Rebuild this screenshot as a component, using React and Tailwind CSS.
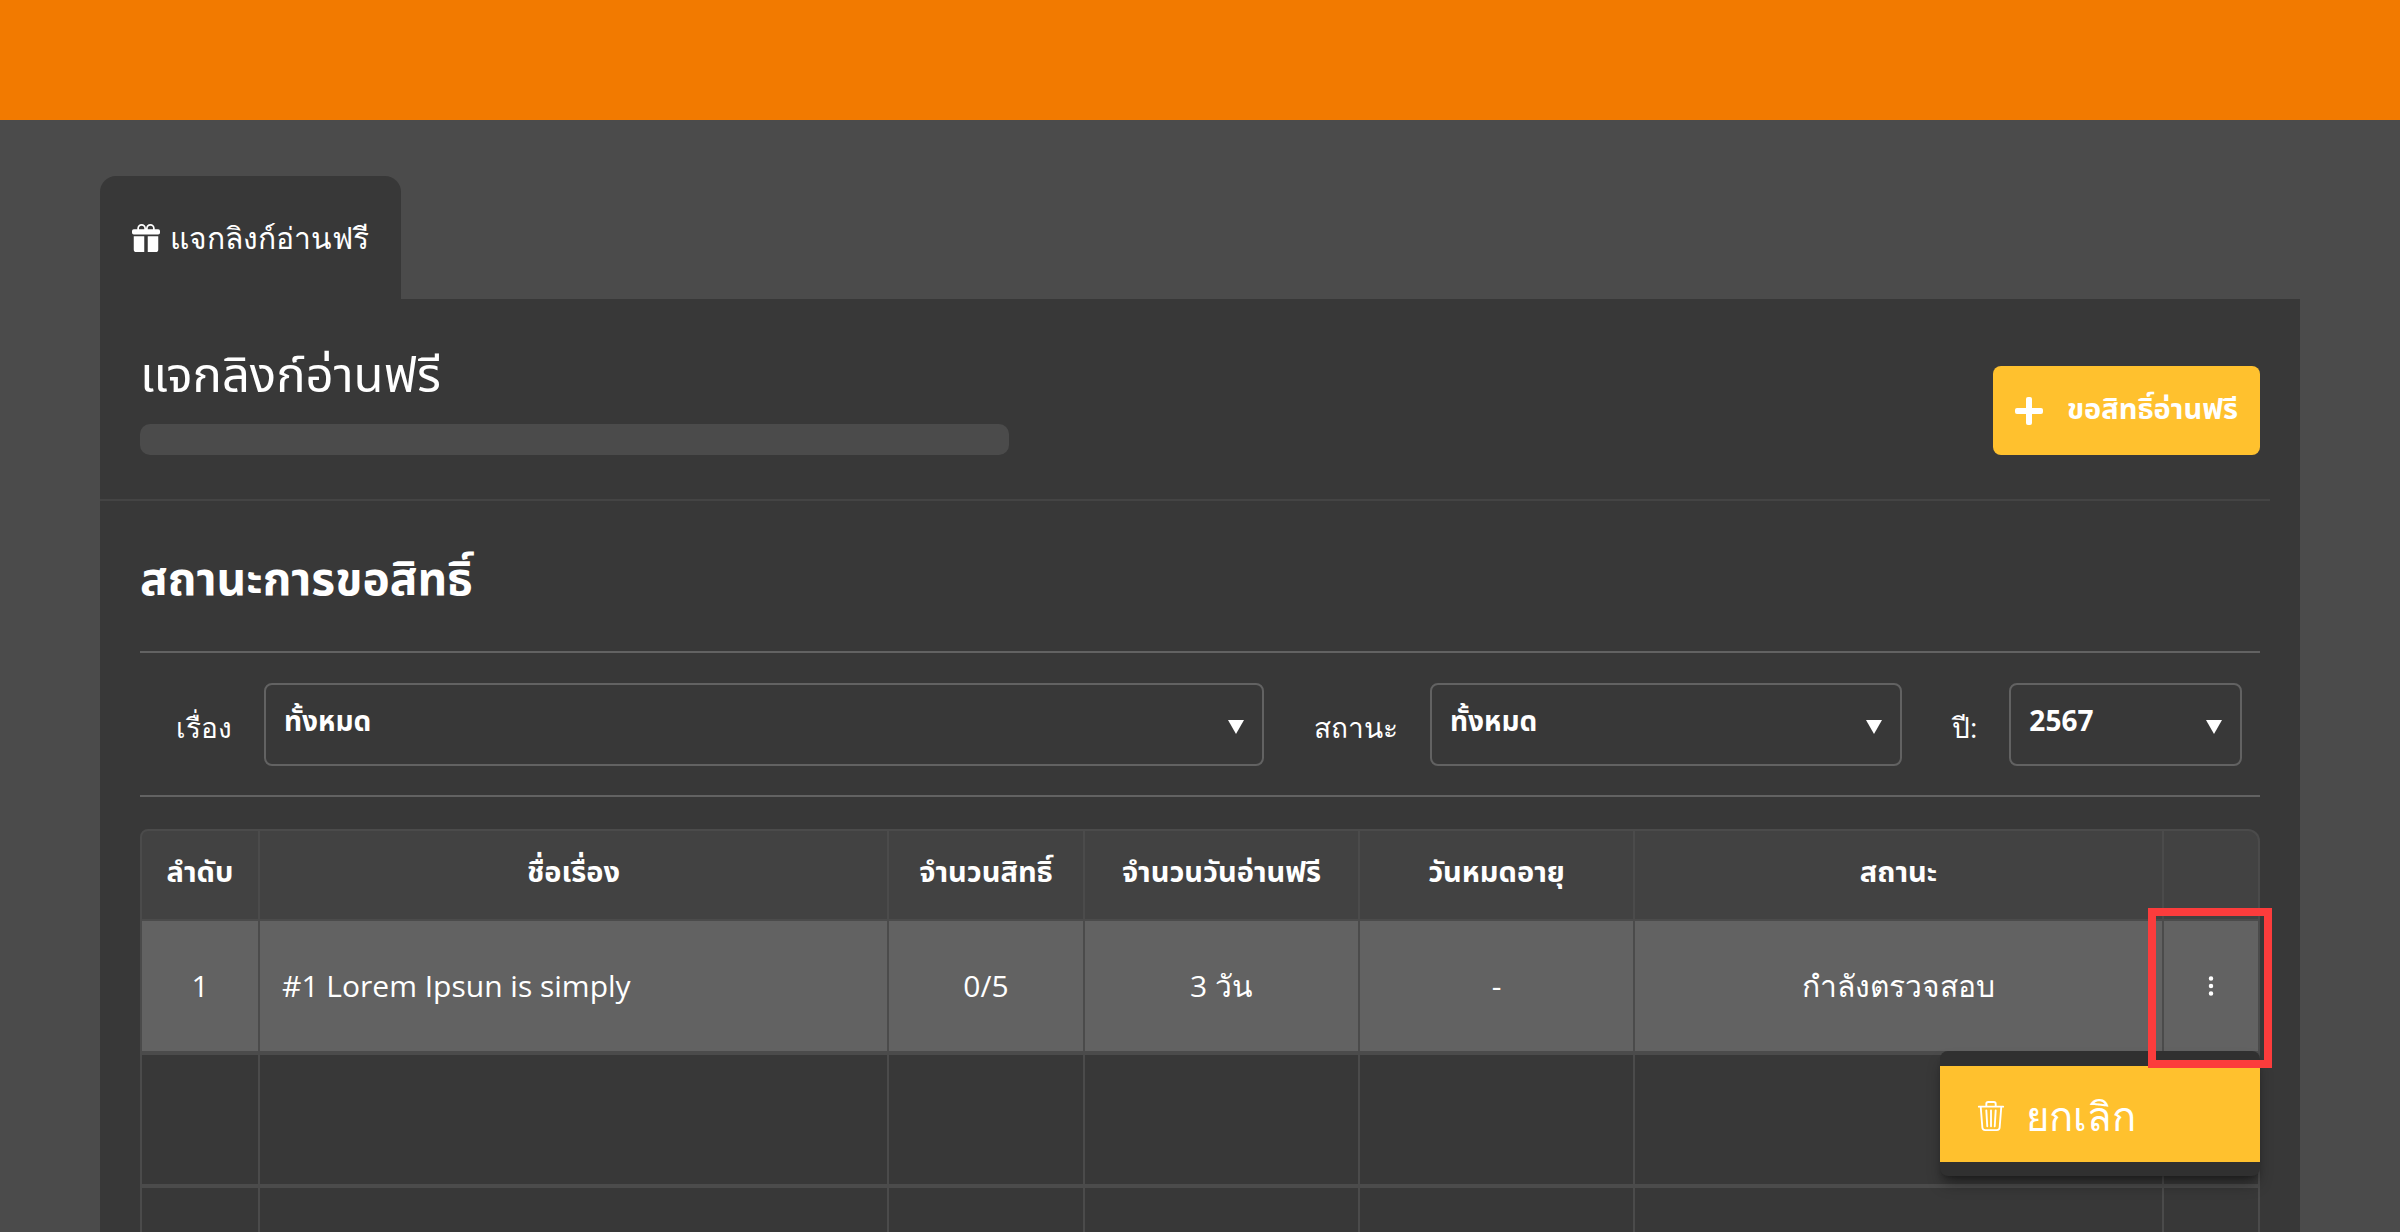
import { BsGiftFill, BsThreeDotsVertical, BsTrash3 } from "react-icons/bs";

const columns = [
  { label: "ลำดับ", width: "w-[120px]" },
  { label: "ชื่อเรื่อง", width: "" },
  { label: "จำนวนสิทธิ์", width: "w-[196px]" },
  { label: "จำนวนวันอ่านฟรี", width: "w-[275px]" },
  { label: "วันหมดอายุ", width: "w-[275px]" },
  { label: "สถานะ", width: "w-[529px]" },
  { label: "", width: "w-24" },
];

const emptyRows = ["second", "third"];

// Headings and bold text use the loopless Thai face; body text uses the looped one.
const headingFont = "font-['Noto_Sans','Noto_Sans_Thai',sans-serif]";
const bodyFont = "font-['Open_Sans',sans-serif]";

function Filter({ id, label, value, className }) {
  return (
    <div className={"flex items-center " + className}>
      <label htmlFor={id} className="mr-8 pt-1 text-[28px] leading-10 whitespace-nowrap">
        {label}
      </label>
      <div className="relative grow">
        <select
          id={id}
          className={
            "block h-[83px] w-full appearance-none rounded-lg border-2 border-[#626262] bg-transparent pr-14 pb-2.5 pl-[18px] text-[28px] font-bold text-white " +
            headingFont
          }
        >
          <option>{value}</option>
        </select>
        <svg
          viewBox="0 0 16 14"
          className="pointer-events-none absolute right-5 bottom-8 h-3.5 w-4"
          aria-hidden="true"
        >
          <path d="M0 0h16L8 14z" fill="white" />
        </svg>
      </div>
    </div>
  );
}

function RequestTable() {
  const cell = "border-r-2 border-b-4 border-[#4b4b4b] first:border-l-2";
  return (
    <table className="mt-8 w-full table-fixed border-separate border-spacing-0 text-center text-[30px] leading-10">
      <thead>
        <tr className={"h-[92px] text-[29px] " + headingFont}>
          {columns.map((column, index) => (
            <th
              key={index}
              className={
                "border-y-2 border-r-2 border-[#4b4b4b] bg-[#424242] pb-2 font-bold whitespace-nowrap first:rounded-tl-lg first:border-l-2 last:rounded-tr-xl " +
                column.width
              }
            >
              {column.label}
            </th>
          ))}
        </tr>
      </thead>
      <tbody>
        <tr className="h-[134px] bg-[#626262]">
          <td className={cell}>1</td>
          <td className={cell + " pl-[22px] text-left"}>#1 Lorem Ipsun is simply</td>
          <td className={cell}>0/5</td>
          <td className={cell}>3 วัน</td>
          <td className={cell}>-</td>
          <td className={cell}>กำลังตรวจสอบ</td>
          <td className={cell + " relative"}>
            <button type="button" aria-label="ตัวเลือก" className="p-4 align-middle">
              <BsThreeDotsVertical className="size-6" />
            </button>
            <div className="absolute top-full -right-0.5 w-80 rounded-lg bg-[#303030] pt-[15px] pb-3.5 shadow-lg shadow-black/40">
              <button
                type="button"
                className="flex h-24 w-full items-center gap-5 bg-[#ffc12e] pt-1 pl-9 text-[40px]"
              >
                <BsTrash3 className="size-[30px]" />
                ยกเลิก
              </button>
            </div>
            <div className="pointer-events-none absolute -top-[13px] -right-3.5 -bottom-[17px] -left-4 border-8 border-[#fc3c3c]" />
          </td>
        </tr>
        {emptyRows.map((row) => (
          <tr key={row} className="h-[133px]">
            {columns.map((_, index) => (
              <td key={index} className={cell} />
            ))}
          </tr>
        ))}
      </tbody>
    </table>
  );
}

export default function App() {
  return (
    <div className={"flex h-screen flex-col overflow-hidden bg-[#4b4b4b] text-white " + bodyFont}>
      <header className="h-[120px] shrink-0 bg-[#f27a00]" />
      <div className="mx-[100px] mt-14 flex grow flex-col">
        <nav className="flex">
          <a
            href="#free-links"
            className="flex h-[123px] items-center gap-2.5 rounded-t-2xl bg-[#383838] px-8 text-[30px] whitespace-nowrap"
          >
            <BsGiftFill className="size-7" />
            แจกลิงก์อ่านฟรี
          </a>
        </nav>
        <main className="grow bg-[#383838]">
          <section className="mr-[30px] flex items-end justify-between border-b-2 border-[#444444] pt-12 pr-2.5 pb-11 pl-10">
            <div className="w-[41%]">
              <h1 className={"text-[49px] leading-[52px] " + headingFont}>แจกลิงก์อ่านฟรี</h1>
              <div className="mt-[25px] h-[31px] rounded-[10px] bg-[#4b4b4b]" />
            </div>
            <button
              type="button"
              className={
                "flex h-[89px] items-center gap-6 rounded-lg bg-[#ffc12e] px-[22px] text-[29px] font-bold whitespace-nowrap " +
                headingFont
              }
            >
              <svg viewBox="0 0 28 28" className="size-7" fill="white" aria-hidden="true">
                <rect x="11" width="6" height="28" rx="2" />
                <rect y="11" width="28" height="6" rx="2" />
              </svg>
              <span className="pb-1.5">ขอสิทธิ์อ่านฟรี</span>
            </button>
          </section>
          <section className="px-10 pt-12">
            <h2 className={"text-[46px] leading-[56px] font-bold " + headingFont}>สถานะการขอสิทธิ์</h2>
            <div className="mt-[46px] flex items-center gap-[50px] border-y-2 border-[#626262] pt-[30px] pr-[18px] pb-[29px] pl-9">
              <Filter id="story" label="เรื่อง" value="ทั้งหมด" className="grow" />
              <Filter id="status" label="สถานะ" value="ทั้งหมด" className="w-[588px]" />
              <Filter id="year" label="ปี:" value="2567" className="w-[290px]" />
            </div>
            <RequestTable />
          </section>
        </main>
      </div>
    </div>
  );
}
